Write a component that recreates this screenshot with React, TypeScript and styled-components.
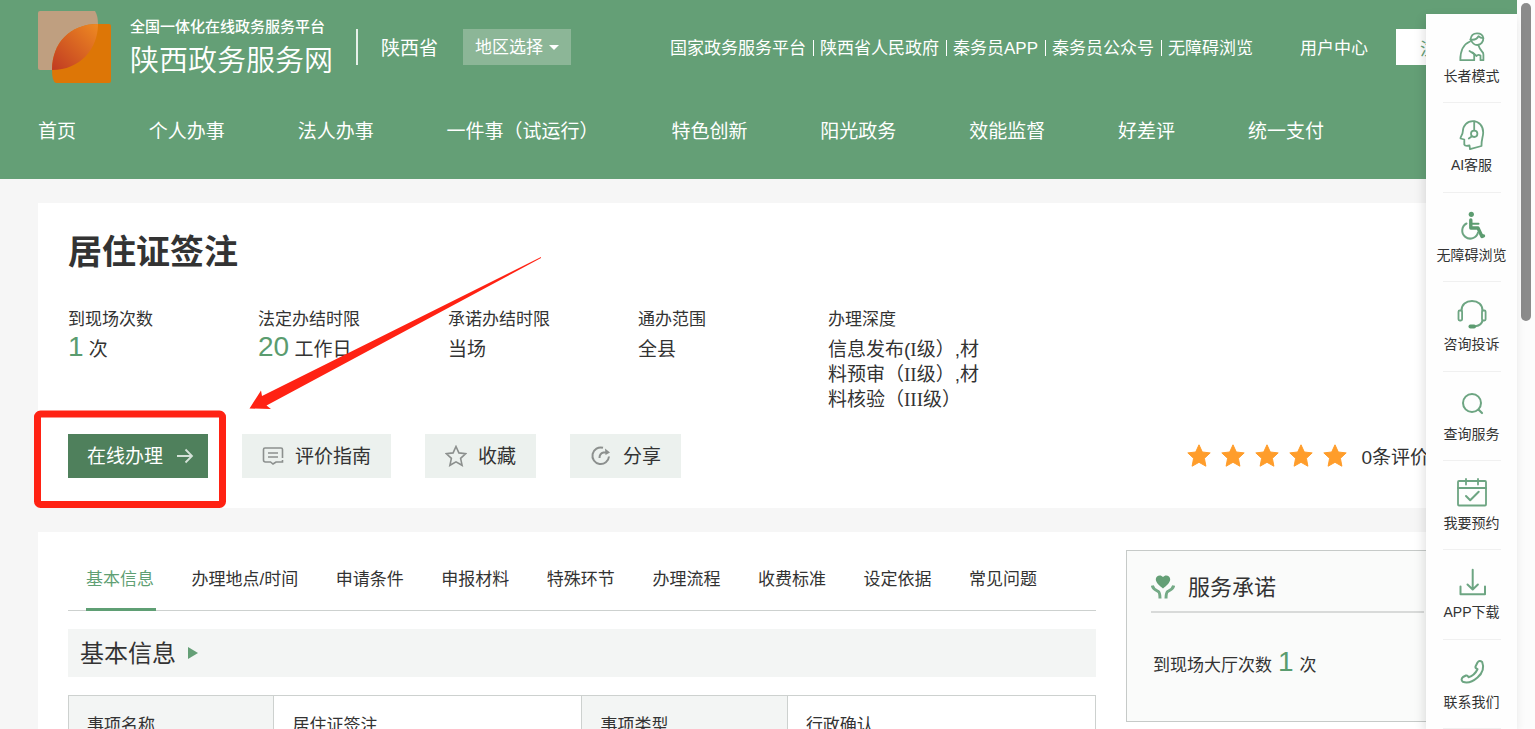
import React from "react";
import styled, { createGlobalStyle } from "styled-components";

const GlobalStyle = createGlobalStyle`
  *, *::before, *::after { box-sizing: border-box; }
  body {
    margin: 0;
    background: #f6f6f6;
    color: #333;
    font-family: "Liberation Sans", "Noto Sans CJK SC", sans-serif;
    overflow: hidden;
  }
  a { color: inherit; text-decoration: none; }
  button, select { font-family: inherit; border: 0; border-radius: 0; cursor: pointer; }
  ul, dl, dd, h1, h2, p { margin: 0; padding: 0; }
  ul { list-style: none; }
  svg { display: block; flex: none; }
`;

const Screen = styled.div`
  position: relative;
  display: flex;
  height: 100vh;
  overflow: hidden;
`;

const Page = styled.div`
  flex: 1;
  min-width: 0;
`;

const ScrollTrack = styled.div`
  width: 18px;
  padding: 3px 4px;
  background: #fcfcfc;
`;

const ScrollThumb = styled.div`
  height: 44%;
  border-radius: 6px;
  background: #8b8b8b;
`;

/* Header */
const Header = styled.header`
  padding: 0 38px 9px;
  background: #649f76;
  color: #fff;
`;

const TopBar = styled.div`
  display: flex;
  align-items: center;
  height: 94px;
  white-space: nowrap;
`;

const Brand = styled.a`
  display: flex;
  align-items: center;
  gap: 18px;
`;

const BrandSlogan = styled.span`
  display: block;
  padding-top: 4px;
  font-size: 15px;
  line-height: 20px;
  font-weight: 500;
`;

const BrandName = styled.span`
  display: block;
  margin-top: 4px;
  font-size: 29px;
  line-height: 40px;
  font-weight: 350;
`;

const Divider = styled.span`
  width: 2px;
  height: 36px;
  margin: 0 23px;
  background: #e6f0e9;
`;

const Province = styled.span`
  padding-bottom: 2px;
  font-size: 19px;
`;

const RegionPicker = styled.label`
  display: grid;
  align-items: center;
  margin-left: 25px;

  & > * { grid-area: 1 / 1; }
  & > svg { justify-self: end; margin-right: 12px; pointer-events: none; }
`;

const RegionSelect = styled.select`
  appearance: none;
  width: 108px;
  height: 36px;
  padding: 0 12px;
  background: #8cb697;
  color: #fff;
  font-size: 17px;
`;

const TopLinks = styled.nav`
  display: flex;
  align-items: center;
  margin-left: auto;
  padding-bottom: 2px;
  font-size: 17px;

  a + a::before {
    content: "";
    display: inline-block;
    width: 1px;
    height: 16px;
    margin: 0 6px 0 7px;
    vertical-align: -2px;
    background: #fff;
  }
`;

const UserCenter = styled.a`
  margin: 0 28px 0 47px;
  padding-bottom: 2px;
  font-size: 17px;
`;

const RegisterButton = styled.button`
  height: 36px;
  padding: 0 25px 0 24px;
  background: #fff;
  color: #649f76;
  font-size: 17px;
`;

const MainNav = styled.nav`
  display: flex;
  justify-content: space-between;
  padding-right: 155px;
  font-size: 19px;
  line-height: 76px;
  white-space: nowrap;
`;

/* Content cards */
const Content = styled.main`
  display: grid;
  gap: 24px;
  padding: 24px 38px;
`;

const Card = styled.section`
  padding: 0 30px 30px;
  background: #fff;
`;

const Title = styled.h1`
  padding-top: 25px;
  font-size: 34px;
  line-height: 48px;
`;

const Facts = styled.dl`
  display: flex;
  margin-top: 31px;
`;

const Fact = styled.div`
  width: 190px;
  padding-right: 30px;

  dt { font-size: 17px; line-height: 26px; }
  dd { margin-top: 4px; font-size: 19px; line-height: 25px; }
`;

const Figure = styled.span`
  color: #5a9c6f;
  font-size: 28px;
  line-height: 0;
`;

const Roman = styled.span`
  font-family: "Liberation Serif", serif;
`;

const Actions = styled.div`
  display: flex;
  align-items: center;
  gap: 34px;
  margin-top: 22px;
`;

const ActionButton = styled.button<{ $primary?: boolean }>`
  display: flex;
  align-items: center;
  gap: ${(p) => (p.$primary ? 13 : 11)}px;
  height: 44px;
  padding: 0 ${(p) => (p.$primary ? 14 : 20)}px 0 ${(p) => (p.$primary ? 19 : 20)}px;
  background: ${(p) => (p.$primary ? "#4f805c" : "#ecf1ee")};
  color: ${(p) => (p.$primary ? "#fff" : "#333")};
  font-size: 19px;
  white-space: nowrap;

  span { padding-bottom: 3px; }
`;

const Rating = styled.div`
  display: flex;
  align-items: center;
  gap: 10px;
  margin: 0 20px 0 auto;
  font-size: 19px;
  white-space: nowrap;

  span { padding: 0 0 2px 4px; }
`;

const Columns = styled.div`
  display: grid;
  grid-template-columns: 1fr 323px;
  align-items: start;
  gap: 30px;
`;

const Tabs = styled.nav`
  display: flex;
  justify-content: space-between;
  height: 79px;
  padding: 0 57px 0 18px;
  border-bottom: 1px solid #cdd1cf;
  white-space: nowrap;
`;

const Tab = styled.a<{ $active?: boolean }>`
  height: 79px;
  padding: 35px 2px 0 0;
  border-bottom: 3px solid ${(p) => (p.$active ? "#5f9f74" : "transparent")};
  color: ${(p) => (p.$active ? "#5f9f74" : "inherit")};
  font-size: 17px;
  line-height: 26px;
`;

const SectionHeading = styled.h2`
  display: flex;
  align-items: center;
  gap: 12px;
  height: 48px;
  margin: 18px 0;
  padding: 0 12px;
  background: #f3f5f4;
  font-size: 24px;
  font-weight: 400;

  span { padding-bottom: 4px; }
`;

const InfoTable = styled.table`
  width: 100%;
  border-collapse: collapse;
  table-layout: fixed;
  font-size: 17px;

  th, td {
    width: 30%;
    height: 60px;
    padding: 0 18px 4px;
    border: 1px solid #cdd1cf;
    font-weight: 400;
    text-align: left;
  }
  th { width: 20%; background: #f3f5f4; }
`;

const PromisePanel = styled.aside`
  height: 172px;
  margin-top: 18px;
  padding: 0 24px;
  border: 1px solid #c6cac8;
  background: #fafbfa;
`;

const PromiseHeading = styled.h2`
  display: flex;
  align-items: center;
  gap: 13px;
  padding: 12px 0 0;
  height: 62px;
  border-bottom: 2px solid #d8dad9;
  font-size: 22px;
  font-weight: 400;

  span { padding-bottom: 4px; }
`;

const PromiseText = styled.p`
  padding: 40px 2px 0;
  font-size: 17px;
  line-height: 26px;

  ${Figure} { margin: 0 6px; }
`;

/* Floating tool bar */
const SideBar = styled.aside`
  position: absolute;
  top: 14px;
  right: 18px;
  bottom: 0;
  display: flex;
  flex-direction: column;
  width: 91px;
  background: #fefefe;
  box-shadow: -2px 4px 10px rgba(0, 0, 0, 0.12);
`;

const SideItem = styled.a`
  flex: 1;
  display: flex;
  flex-direction: column;
  align-items: center;
  padding-top: 19px;
  font-size: 14px;
  line-height: 20px;
  white-space: nowrap;

  span { margin-top: 5px; }
  &::after {
    content: "";
    width: 58px;
    height: 1px;
    margin-top: auto;
    background: #f0f0f0;
  }
`;

/* Hand-drawn marker lying over the page */
const Marker = styled.svg`
  position: absolute;
  top: 257px;
  left: 33px;
  pointer-events: none;
`;

const Logo = () => (
  <svg width="74" height="72" viewBox="0 0 74 72" aria-hidden="true">
    <defs>
      <linearGradient id="lens" x1="0" y1="1" x2="1" y2="0">
        <stop offset="0" stopColor="#c03a22" />
        <stop offset="1" stopColor="#ee8a22" />
      </linearGradient>
    </defs>
    <path d="M2 0H57Q60 5 60 13C60 38 42 59 14 59H2Q0 59 0 57V2Q0 0 2 0Z" fill="#bf9f80" />
    <path d="M60 13H71Q73 13 73 15V70Q73 72 71 72H18Q14 71 14 59C14 32 32 13 60 13Z" fill="#dd7606" />
    <path d="M60 13C60 38 42 59 14 59C14 32 32 13 60 13Z" fill="url(#lens)" />
  </svg>
);

const icon = {
  width: 28,
  height: 28,
  viewBox: "0 0 28 28",
  fill: "none",
  stroke: "#6da582",
  strokeWidth: 1.8,
  strokeLinecap: "round" as const,
  strokeLinejoin: "round" as const,
  overflow: "visible",
  "aria-hidden": true,
};

const sideItems: { label: string; drawing: React.ReactNode }[] = [
  {
    label: "长者模式",
    drawing: (
      <>
        <path d="M12.500 6.500C13 2.500 15.500 .4 19 .4c3.500 0 6 2 6.300 4.800.2 3.600-2.300 6.800-6 6.800-2.800 0-5-1.500-6.800-5.500Z" />
        <path d="M12.500 6.500c4 .8 6.500-.5 8-3.300 1.200 1.300 2.800 1.900 4.800 2" />
        <path d="M12 8.500C6 11 2.300 16 2.300 27.200H16.200V21L11.500 18" />
        <path d="M20.500 12.500c1 3 2 4.500 3.500 6 1.300 1.200 1.500 2 1.400 3.200V27.200H22.500V22.500q-2.500-1.500-4 .5L14.500 19.500" />
      </>
    ),
  },
  {
    label: "AI客服",
    drawing: (
      <>
        <path d="M4.800 9.500C5 3.500 9-.8 15-.8S25.200 4 25.200 10.500c0 4-2 7.500-1.700 13.500L12 27.200l-.5-3.700c-2 .4-4.600.6-5.200-.8V17.500L2.500 16.500C2.300 15 4.800 12.500 4.800 9.500Z" />
        <circle cx="16.200" cy="11.800" r="3.200" />
        <path d="M16.200 8.300V-.5M14 14.200l-3.200 2.300" />
      </>
    ),
  },
  {
    label: "无障碍浏览",
    drawing: (
      <>
        <circle cx="13.300" cy="2.300" r="2.600" fill="#5c9c70" stroke="none" />
        <path d="M12.800 8V16H20L24 24.500l1.500-.6" stroke="#5c9c70" strokeWidth="3.400" />
        <path d="M13.500 11.800h7" stroke="#5c9c70" strokeWidth="2" />
        <path d="M8.500 11.500A8 8 0 1 0 20 20.500" strokeWidth="2" />
      </>
    ),
  },
  {
    label: "咨询投诉",
    drawing: (
      <>
        <path d="M3.500 9.500C3.500 3.500 8 0 14 0s10.500 3.500 10.500 9.500M24.500 19.500c-.5 3-3 5-7 5.800" strokeWidth="2" />
        <rect x=".5" y="9.500" width="3.600" height="10" rx="1.200" />
        <rect x="24" y="9.500" width="3.600" height="10" rx="1.200" />
        <rect x="10.500" y="23.600" width="7.500" height="3.800" rx="1.900" fill="#5c9c70" stroke="none" />
      </>
    ),
  },
  {
    label: "查询服务",
    drawing: (
      <>
        <circle cx="14" cy="12" r="9" strokeWidth="2" />
        <path d="M20.500 18.500l3.500 3.500" strokeWidth="2.200" />
      </>
    ),
  },
  {
    label: "我要预约",
    drawing: (
      <>
        <rect x="0" y="1" width="28" height="24.500" rx="1" />
        <path d="M0 8H28M8-1v5.500M20-1v5.500" />
        <path d="M8 16l4.200 4.300 8.500-8.500" strokeWidth="2" />
      </>
    ),
  },
  {
    label: "APP下载",
    drawing: (
      <path d="M14.700 .8V20M9.500 15.500l5.200 5 5.200-5M2.500 17.500V25.200H27V17.500" strokeWidth="2" />
    ),
  },
  {
    label: "联系我们",
    drawing: (
      <path
        d="M17.500 7.500L19.500 3.500Q21.500 .8 24.200 3Q27.500 11.500 19.500 18.500Q11.500 25.500 4.800 22.800Q2.300 20.500 5 18L8 16.500Q9.500 16 10.500 18.200Q16.500 16.500 19.500 10.200Q17 9 17.500 7.500Z"
        strokeWidth="2"
      />
    ),
  },
];

const Star = () => (
  <svg width="24" height="24" viewBox="0 0 24 24" aria-hidden="true">
    <path
      d="M12 .8l3.300 7.200 7.900.9-5.800 5.400 1.500 7.900L12 18.300l-6.900 3.900 1.500-7.900L.8 8.900 8.700 8Z"
      fill="#ff9d2b"
      stroke="#ff9d2b"
      strokeLinejoin="round"
    />
  </svg>
);

const actionIcon = {
  width: 22,
  height: 22,
  viewBox: "0 0 22 22",
  fill: "none",
  stroke: "#8c908e",
  strokeWidth: 1.6,
  "aria-hidden": true,
};

const links = ["国家政务服务平台", "陕西省人民政府", "秦务员APP", "秦务员公众号", "无障碍浏览"];
const nav = ["首页", "个人办事", "法人办事", "一件事（试运行）", "特色创新", "阳光政务", "效能监督", "好差评", "统一支付"];
const tabs = ["基本信息", "办理地点/时间", "申请条件", "申报材料", "特殊环节", "办理流程", "收费标准", "设定依据", "常见问题"];

export default function App() {
  return (
    <Screen>
      <GlobalStyle />
      <Page>
        <Header>
          <TopBar>
            <Brand href="#">
              <Logo />
              <span>
                <BrandSlogan>全国一体化在线政务服务平台</BrandSlogan>
                <BrandName>陕西政务服务网</BrandName>
              </span>
            </Brand>
            <Divider />
            <Province>陕西省</Province>
            <RegionPicker>
              <RegionSelect aria-label="地区选择">
                <option>地区选择</option>
              </RegionSelect>
              <svg width="10" height="5" viewBox="0 0 10 5" aria-hidden="true">
                <path d="M0 0H10L5 5Z" fill="#fff" />
              </svg>
            </RegionPicker>
            <TopLinks>
              {links.map((l) => (
                <a href="#" key={l}>{l}</a>
              ))}
            </TopLinks>
            <UserCenter href="#">用户中心</UserCenter>
            <RegisterButton>注册</RegisterButton>
          </TopBar>
          <MainNav>
            {nav.map((n) => (
              <a href="#" key={n}>{n}</a>
            ))}
          </MainNav>
        </Header>

        <Content>
          <Card>
            <Title>居住证签注</Title>
            <Facts>
              <Fact>
                <dt>到现场次数</dt>
                <dd><Figure>1</Figure> 次</dd>
              </Fact>
              <Fact>
                <dt>法定办结时限</dt>
                <dd><Figure>20</Figure> 工作日</dd>
              </Fact>
              <Fact>
                <dt>承诺办结时限</dt>
                <dd>当场</dd>
              </Fact>
              <Fact>
                <dt>通办范围</dt>
                <dd>全县</dd>
              </Fact>
              <Fact>
                <dt>办理深度</dt>
                <dd>
                  信息发布(<Roman>I</Roman>级）,材料预审（<Roman>II</Roman>级）,材料核验（<Roman>III</Roman>级）
                </dd>
              </Fact>
            </Facts>
            <Actions>
              <ActionButton $primary>
                <span>在线办理</span>
                <svg width="18" height="18" viewBox="0 0 18 18" fill="none" stroke="#d5e2d9" strokeWidth="1.800" aria-hidden="true">
                  <path d="M1 9H16M9.500 2.500L16 9l-6.500 6.500" />
                </svg>
              </ActionButton>
              <ActionButton>
                <svg {...actionIcon}>
                  <path d="M6 17H3.500Q1.500 17 1.500 15V4.500Q1.500 3 3 3H19Q20.500 3 20.500 4.500V13M20.500 15V17H14L11 19 8.500 17H6M6 8H16M6 12H16" />
                </svg>
                <span>评价指南</span>
              </ActionButton>
              <ActionButton>
                <svg {...actionIcon}>
                  <path d="M11 1.500l2.900 6.400 6.900.7-5.200 4.700 1.500 7L11 16.800 4.900 20.300l1.500-7L1.200 8.600l6.900-.7Z" />
                </svg>
                <span>收藏</span>
              </ActionButton>
              <ActionButton>
                <svg {...actionIcon} strokeWidth="2">
                  <path d="M13 2.800A8.300 8.300 0 1 0 19 11.500" />
                  <path d="M9.500 13Q9.500 8.500 13.500 7.500H17" />
                  <path d="M15 3.500L20 7.500 15.500 10Z" fill="#8c908e" stroke="none" />
                </svg>
                <span>分享</span>
              </ActionButton>
              <Rating>
                {[1, 2, 3, 4, 5].map((n) => (
                  <Star key={n} />
                ))}
                <span>0条评价</span>
              </Rating>
            </Actions>
          </Card>

          <Card>
            <Columns>
              <div>
                <Tabs>
                  {tabs.map((t, i) => (
                    <Tab href="#" key={t} $active={i === 0}>{t}</Tab>
                  ))}
                </Tabs>
                <SectionHeading>
                  <span>基本信息</span>
                  <svg width="10" height="12" viewBox="0 0 10 12" aria-hidden="true">
                    <path d="M0 0L10 6 0 12Z" fill="#649f76" />
                  </svg>
                </SectionHeading>
                <InfoTable>
                  <tbody>
                    <tr>
                      <th scope="row">事项名称</th>
                      <td>居住证签注</td>
                      <th scope="row">事项类型</th>
                      <td>行政确认</td>
                    </tr>
                  </tbody>
                </InfoTable>
              </div>
              <PromisePanel>
                <PromiseHeading>
                  <svg width="24" height="24" viewBox="0 0 24 24" aria-hidden="true">
                    <path d="M12 13.500C8 10.500 4.800 7.500 4.800 4.300 4.800 .2 10 -.8 12 2 14-.8 19.200 .2 19.200 4.300 19.200 7.500 16 10.500 12 13.500Z" fill="#649f76" />
                    <path
                      d="M1.300 10.500C2 14 4.500 15 7 16.300 8.800 17.300 9 19 9 23.500M22.700 10.500C22 14 19.500 15 17 16.300 15.200 17.300 15 19 15 23.500"
                      fill="none"
                      stroke="#74aa86"
                      strokeWidth="3"
                    />
                  </svg>
                  <span>服务承诺</span>
                </PromiseHeading>
                <PromiseText>
                  到现场大厅次数<Figure>1</Figure>次
                </PromiseText>
              </PromisePanel>
            </Columns>
          </Card>
        </Content>
      </Page>

      <ScrollTrack>
        <ScrollThumb />
      </ScrollTrack>

      <Marker width="510" height="253" viewBox="0 0 510 253" aria-hidden="true">
        <path d="M508 0L229 139 228 133.500 216.500 151.500 238 152 233.500 148.500L508 1Z" fill="#ff2213" />
        <rect x="4.500" y="157" width="185" height="90.500" rx="3" fill="none" stroke="#ff2213" strokeWidth="7" />
      </Marker>

      <SideBar>
        {sideItems.map((s) => (
          <SideItem href="#" key={s.label}>
            <svg {...icon}>{s.drawing}</svg>
            <span>{s.label}</span>
          </SideItem>
        ))}
      </SideBar>
    </Screen>
  );
}
